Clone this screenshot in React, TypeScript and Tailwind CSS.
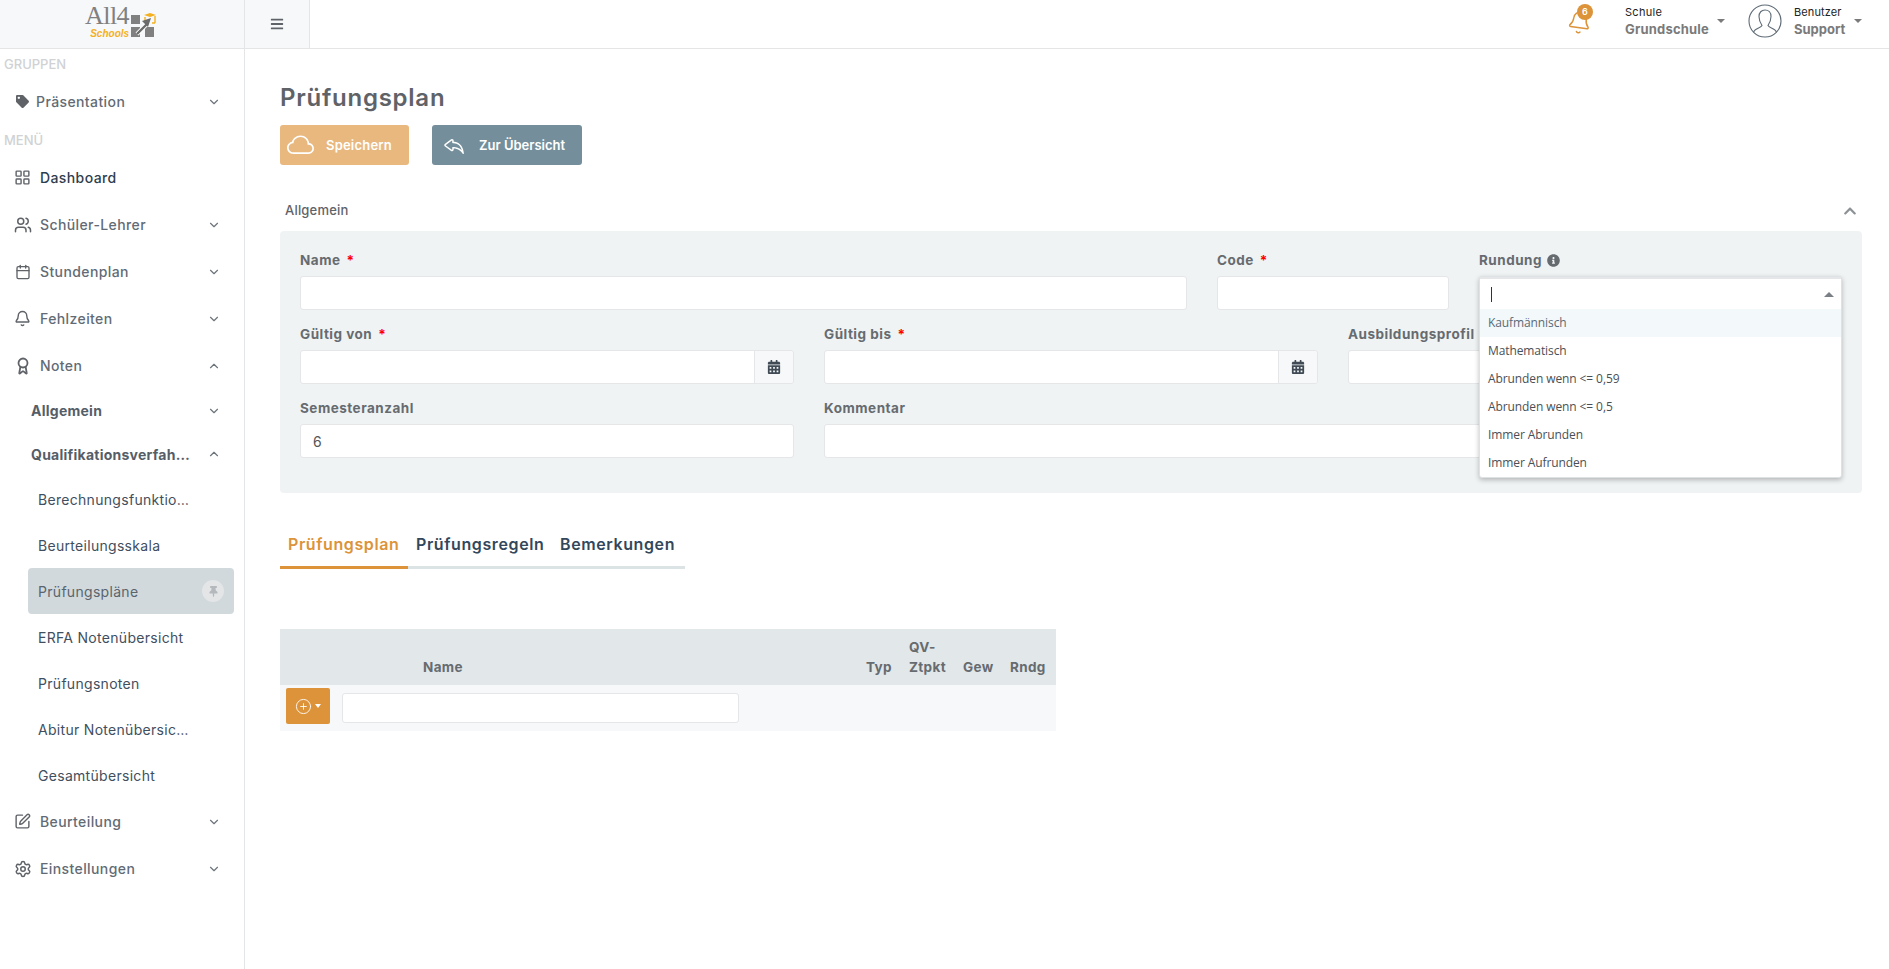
import React from "react";
import { Award, Bell, Calendar, ChevronDown, ChevronUp, CirclePlus, LayoutGrid, Settings, SquarePen, Users } from "lucide-react";
import { FaBars, FaCalendarAlt, FaChevronUp, FaInfoCircle, FaTag, FaThumbtack } from "react-icons/fa";
import { BsCloud, BsReply } from "react-icons/bs";

const font = "font-['Inter','Liberation_Sans',sans-serif]";

function Logo() {
  return (
    <div className="flex items-start h-full w-full justify-center pt-[3px] pr-[2px]">
      <div className="flex flex-col items-end">
        <span className="font-['Liberation_Serif',serif] text-[26px] leading-[25px] text-[#808080] tracking-[-0.5px]">All4</span>
        <span className="font-['Liberation_Sans',sans-serif] italic font-bold text-[10px] leading-[12px] text-[#f5b020]">Schools</span>
      </div>
      <svg width="27" height="27" viewBox="0 0 27 27" className="mt-[9px] ml-[1px]">
        <rect x="1" y="3" width="9" height="9" fill="#808080" />
        <rect x="1" y="15" width="9" height="10" fill="#808080" />
        <rect x="15" y="15" width="9" height="10" fill="#808080" />
        <path d="M14 3 L20 1 L26 3 L20 5 Z" fill="#f5b020" />
        <path d="M15 5 V11 M25 4 V11 M22 11 H25" stroke="#f5b020" strokeWidth="1.4" fill="none" />
        <path d="M7 22 L18 11" stroke="#fff" strokeWidth="4" />
        <path d="M7 22 L17 12" stroke="#6b6b6b" strokeWidth="2.4" />
        <path d="M12 9 L21 6 L18 15 Z" fill="#6b6b6b" />
      </svg>
    </div>
  );
}

function MainRow({ icon, label, chevron = "down", dark = false, textX = "ml-[10px]" }: { icon: React.ReactNode; label: string; chevron?: "down" | "up" | "none"; dark?: boolean; textX?: string }) {
  return (
    <div className={`flex items-center pl-[15px] pr-[23px] h-[47px] ${dark ? "text-[#2f3e4e]" : "text-[#626b75]"}`}>
      <span className="w-[15px] flex justify-center shrink-0 text-[#5f6368]">{icon}</span>
      <span className={`${textX} flex-1 text-[14px] font-medium tracking-[0.4px] whitespace-nowrap`}>{label}</span>
      {chevron === "down" && <ChevronDown size={14} className="text-[#6d747b]" />}
      {chevron === "up" && <ChevronUp size={14} className="text-[#6d747b]" />}
    </div>
  );
}

function SubGroup({ label, up = false, h }: { label: string; up?: boolean; h: string }) {
  return (
    <div className={`flex items-center pl-[31px] pr-[23px] ${h}`}>
      <span className="flex-1 text-[14px] font-bold text-[#555e68] tracking-[0.25px] whitespace-nowrap">{label}</span>
      {up ? <ChevronUp size={14} className="text-[#6d747b]" /> : <ChevronDown size={14} className="text-[#6d747b]" />}
    </div>
  );
}

function Leaf({ label, active = false }: { label: string; active?: boolean }) {
  return (
    <div className={`ml-[28px] mr-[10px] h-[46px] pl-[10px] pr-[10px] flex items-center justify-between rounded-[4px] ${active ? "bg-[#d1d9dd] text-[#5a646e]" : "text-[#3f4f60]"}`}>
      <span className="text-[14px] tracking-[0.3px] whitespace-nowrap">{label}</span>
      {active && (
        <span className="w-[22px] h-[22px] rounded-full bg-[#e3e5e7] flex items-center justify-center">
          <FaThumbtack size={11} className="text-[#b5b9bd]" />
        </span>
      )}
    </div>
  );
}

function Sidebar() {
  return (
    <aside className="w-[245px] shrink-0 border-r border-[#e3e5e7] bg-white">
      <div className="pl-[4px] h-[30px] pt-[6px] text-[13px] leading-[18px] text-[#d0d2d4] font-medium">GRUPPEN</div>
      <div className="-mt-[1px]">
        <MainRow icon={<FaTag size={13} className="shrink-0" />} label="Präsentation" textX="ml-[6px]" />
      </div>
      <div className="pl-[4px] h-[29px] pt-[6px] text-[13px] leading-[18px] text-[#d0d2d4] font-medium">MENÜ</div>
      <MainRow icon={<LayoutGrid size={17} className="shrink-0" />} label="Dashboard" chevron="none" dark />
      <MainRow icon={<Users size={18} className="shrink-0" />} label="Schüler-Lehrer" />
      <MainRow icon={<Calendar size={16} className="shrink-0" />} label="Stundenplan" />
      <MainRow icon={<Bell size={17} className="shrink-0" />} label="Fehlzeiten" />
      <MainRow icon={<Award size={18} strokeWidth={2.4} className="shrink-0" />} label="Noten" chevron="up" />
      <SubGroup label="Allgemein" h="h-[43px]" />
      <SubGroup label="Qualifikationsverfah…" up h="h-[44px]" />
      <Leaf label="Berechnungsfunktio…" />
      <Leaf label="Beurteilungsskala" />
      <Leaf label="Prüfungspläne" active />
      <Leaf label="ERFA Notenübersicht" />
      <Leaf label="Prüfungsnoten" />
      <Leaf label="Abitur Notenübersic…" />
      <Leaf label="Gesamtübersicht" />
      <MainRow icon={<SquarePen size={17} className="shrink-0" />} label="Beurteilung" />
      <MainRow icon={<Settings size={18} className="shrink-0" />} label="Einstellungen" />
    </aside>
  );
}

function Header() {
  return (
    <header className="h-[49px] flex items-stretch border-b border-[#e3e5e7] bg-white">
      <div className="w-[245px] bg-[#f6f8fa] border-r border-[#e3e5e7]"><Logo /></div>
      <div className="w-[65px] bg-[#f6f8fa] border-r border-[#e3e5e7] flex items-center justify-center text-[#5f6368]">
        <FaBars size={14} />
      </div>
      <div className="flex-1" />
      <div className="relative flex items-center mr-[33px] mb-[6px]">
        <Bell size={25} strokeWidth={1.4} className="text-[#dc9339] rotate-[8deg] mt-[3px]" />
        <span className="absolute top-[4px] left-[10px] w-[16px] h-[16px] rounded-full bg-[#dc9339] text-white text-[9px] font-semibold flex items-center justify-center">6</span>
      </div>
      <div className="flex flex-col justify-center mb-[5px] w-[87px]">
        <span className="text-[11px] leading-[15px] text-[#222] tracking-[0.3px]">Schule</span>
        <span className="text-[13px] leading-[19px] font-bold text-[#7a7a7a] tracking-[0.2px]">Grundschule</span>
      </div>
      <span className="w-0 h-0 ml-[5px] mt-[19px] border-x-[4px] border-x-transparent border-t-[4px] border-t-[#7a7a7a]" />
      <svg width="34" height="34" viewBox="0 0 34 34" className="ml-[23px] mt-[4px]" fill="none" stroke="#5f6b76" strokeWidth="1.1">
        <circle cx="17" cy="17" r="16" />
        <path d="M5.5 28 C7 24 13 24 14 21.5 C12 18.5 11 16 11 12.5 C11 8.5 13.5 6 17 6 C20.5 6 23 8.5 23 12.5 C23 16 22 18.5 20 21.5 C21 24 27 24 28.5 28" />
      </svg>
      <div className="flex flex-col justify-center ml-[12px] mb-[5px] w-[52px]">
        <span className="text-[11px] leading-[15px] text-[#222] tracking-[0.1px]">Benutzer</span>
        <span className="text-[13px] leading-[19px] font-bold text-[#7a7a7a]">Support</span>
      </div>
      <span className="w-0 h-0 ml-[8px] mt-[19px] mr-[27px] border-x-[4px] border-x-transparent border-t-[4px] border-t-[#7a7a7a]" />
    </header>
  );
}

function FieldLabel({ text, required = false }: { text: string; required?: boolean }) {
  return (
    <div className="h-[18px] text-[13.5px] leading-[18px] font-bold text-[#666b70] whitespace-nowrap tracking-[0.5px]">
      {text}
      {required && <span className="text-[#ff0000] ml-[6px]">*</span>}
    </div>
  );
}

const inputCls = "mt-[7px] h-[34px] w-full bg-white border border-[#e4e6e8] rounded-[3px] px-[12px] flex items-center text-[14px] text-[#555]";

function DateField({ label }: { label: string }) {
  return (
    <div className="flex-1">
      <FieldLabel text={label} required />
      <div className="mt-[7px] h-[34px] flex bg-white border border-[#e4e6e8] rounded-[3px]">
        <div className="flex-1" />
        <div className="w-[39px] bg-[#f6f8f9] border-l border-[#e4e6e8] rounded-r-[3px] flex items-center justify-center text-[#3f4a55]">
          <FaCalendarAlt size={14} />
        </div>
      </div>
    </div>
  );
}

function RundungDropdown() {
  const items = ["Kaufmännisch", "Mathematisch", "Abrunden wenn <= 0,59", "Abrunden wenn <= 0,5", "Immer Abrunden", "Immer Aufrunden"];
  return (
    <div className="absolute left-0 right-0 top-[25px] z-10 bg-white border border-[#dfe2e4] rounded-[3px] shadow-[0_2px_5px_rgba(0,0,0,0.25)]">
      <div className="h-[32px] flex items-center justify-between pl-[11px] pr-[7px] border-t-2 border-[#e4e6e8]">
        <span className="w-px h-[15px] bg-[#333]" />
        <span className="w-0 h-0 border-x-[5px] border-x-transparent border-b-[5px] border-b-[#7a7f85]" />
      </div>
      {items.map((t, i) => (
        <div key={t} className={`h-[28px] pl-[8px] flex items-center font-['Open_Sans',sans-serif] text-[12px] tracking-[-0.1px] ${i === 0 ? "bg-[#f3f8fb] text-[#5a6a75]" : "text-[#4a4f55]"}`}>{t}</div>
      ))}
    </div>
  );
}

function GeneralPanel() {
  return (
    <div className="bg-[#f0f3f4] rounded-[4px] px-[20px] pt-[20px] pb-[35px] mt-[10px]">
      <div className="flex gap-[30px]">
        <div className="w-[887px]"><FieldLabel text="Name" required /><div className={inputCls} /></div>
        <div className="w-[232px]"><FieldLabel text="Code" required /><div className={inputCls} /></div>
        <div className="flex-1 relative">
          <div className="flex items-center gap-[5px] h-[18px] text-[13.5px] font-bold text-[#666b70] tracking-[0.5px]">Rundung <FaInfoCircle size={13} /></div>
          <div className={inputCls} />
          <RundungDropdown />
        </div>
      </div>
      <div className="flex gap-[30px] mt-[15px]">
        <DateField label="Gültig von" />
        <DateField label="Gültig bis" />
        <div className="flex-1"><FieldLabel text="Ausbildungsprofil" /><div className={inputCls} /></div>
      </div>
      <div className="flex gap-[30px] mt-[15px]">
        <div className="w-[494px]"><FieldLabel text="Semesteranzahl" /><div className={inputCls}>6</div></div>
        <div className="flex-1"><FieldLabel text="Kommentar" /><div className={inputCls} /></div>
      </div>
    </div>
  );
}

function Tabs() {
  const cls = "text-[16px] leading-[22px] font-semibold tracking-[0.6px] whitespace-nowrap";
  return (
    <div className="mt-[32px] w-[405px] h-[44px] flex border-b-[3px] border-[#dbe3e5]">
      <div className={`w-[128px] h-[44px] pl-[8px] pt-[8px] border-b-[3px] border-[#dc9339] text-[#dc9339] ${cls}`}>Prüfungsplan</div>
      <div className={`w-[144px] h-[41px] pl-[8px] pt-[8px] text-[#33475b] ${cls}`}>Prüfungsregeln</div>
      <div className={`h-[41px] pl-[8px] pt-[8px] text-[#33475b] ${cls}`}>Bemerkungen</div>
    </div>
  );
}

function PlanTable() {
  return (
    <div className="mt-[60px] w-[776px]">
      <div className="h-[56px] bg-[#e2e7e9] flex items-end pb-[8px] text-[13.5px] leading-[20px] font-bold text-[#666b70] tracking-[0.35px]">
        <div className="w-[143px]" />
        <div className="w-[443px]">Name</div>
        <div className="w-[43px]">Typ</div>
        <div className="w-[54px]">QV-<br />Ztpkt</div>
        <div className="w-[47px]">Gew</div>
        <div>Rndg</div>
      </div>
      <div className="h-[46px] bg-[#f6f8f9] flex items-start pt-[3px] pl-[6px]">
        <div className="w-[44px] h-[36px] bg-[#dc9339] rounded-[2px] flex items-center justify-center gap-[3px] text-white">
          <CirclePlus size={17} strokeWidth={1.25} />
          <span className="w-0 h-0 border-x-[3.5px] border-x-transparent border-t-[4px] border-t-white" />
        </div>
        <div className="ml-[12px] mt-[5px] w-[397px] h-[30px] bg-white border border-[#e4e6e8] rounded-[3px]" />
      </div>
    </div>
  );
}

export default function App() {
  return (
    <div className={`${font} w-full min-h-screen flex flex-col bg-white`}>
      <Header />
      <div className="flex flex-1">
        <Sidebar />
        <main className="flex-1 pl-[35px] pr-[27px]">
          <h1 className="mt-[32px] h-[34px] text-[24px] leading-[34px] font-semibold text-[#5f6368] tracking-[0.75px]">Prüfungsplan</h1>
          <div className="mt-[10px] flex gap-[23px]">
            <div className="w-[129px] h-[40px] bg-[#e9b87f] rounded-[3px] flex items-center pl-[7px] text-white">
              <BsCloud size={27} />
              <span className="ml-[12px] mt-[2px] text-[13px] font-semibold tracking-[0.2px]">Speichern</span>
            </div>
            <div className="w-[150px] h-[40px] bg-[#748f9b] rounded-[3px] flex items-center pl-[10px] text-white">
              <BsReply size={24} />
              <span className="ml-[13px] mt-[2px] text-[13px] font-semibold whitespace-nowrap">Zur Übersicht</span>
            </div>
          </div>
          <div className="mt-[34px] h-[22px] flex items-center justify-between pl-[5px] pr-[5px] text-[#5f6368]">
            <span className="text-[13px] font-medium mt-[2px] tracking-[0.2px]">Allgemein</span>
            <FaChevronUp size={14} className="text-[#8e9296] mt-[2px]" />
          </div>
          <GeneralPanel />
          <Tabs />
          <PlanTable />
        </main>
      </div>
    </div>
  );
}
